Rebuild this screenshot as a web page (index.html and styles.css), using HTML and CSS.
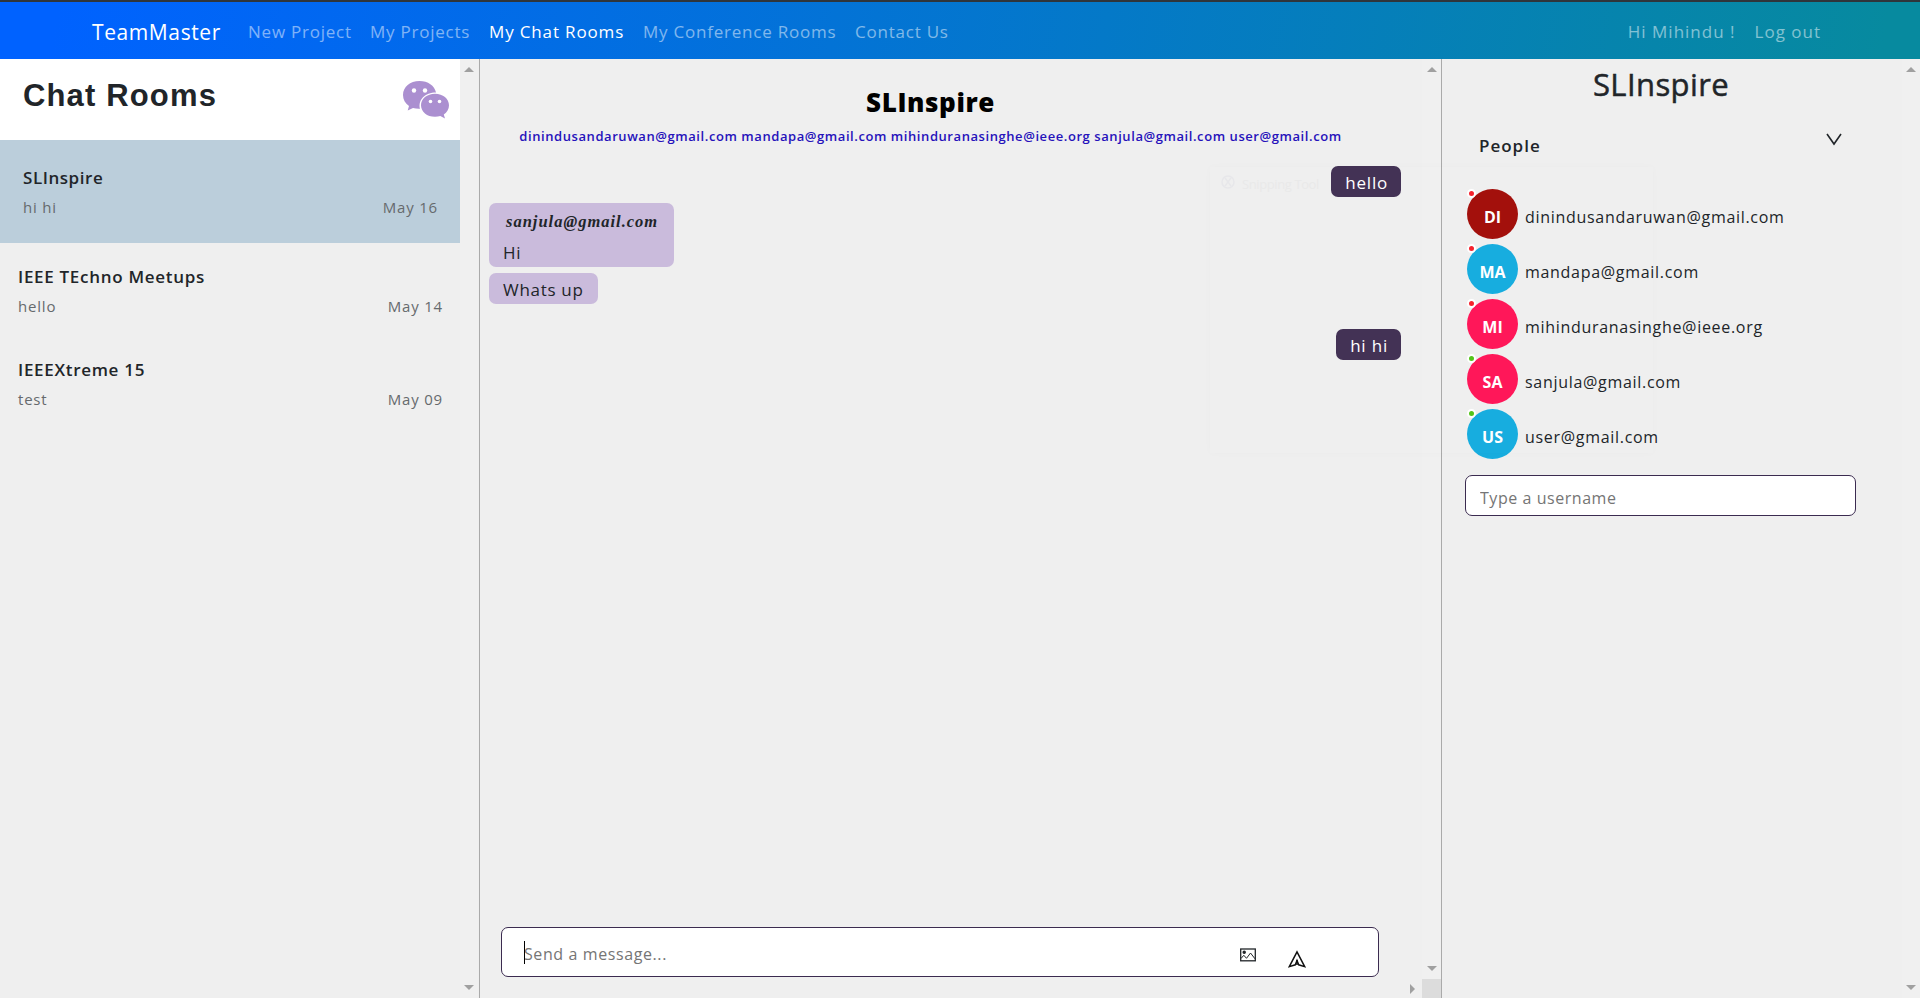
FILE: index.html
```
<!DOCTYPE html>
<html lang="en">
<head>
<meta charset="utf-8">
<title>TeamMaster</title>
<link rel="stylesheet" href="styles.css">
</head>
<body>
<nav class="navbar">
  <a class="brand">TeamMaster</a>
  <a class="link w-np">New Project</a>
  <a class="link w-mp">My Projects</a>
  <a class="link active w-cr">My Chat Rooms</a>
  <a class="link w-cf">My Conference Rooms</a>
  <a class="link">Contact Us</a>
  <div class="account"><a class="link">Hi Mihindu !</a><a class="link">Log out</a></div>
</nav>
<main class="layout">
  <aside class="rooms">
    <div class="rooms-list">
      <header class="rooms-head">
        <h1>Chat Rooms</h1>
        <svg class="chat-icon" width="48" height="40" viewBox="0 0 48 40">
          <path fill="#ab8fd0" d="M17.500 1C8 1 1 7 1 15c0 4.500 2.200 8.300 6 11l-1.300 4.500L11 28c2 .6 4.300.9 7 .8-2.200-9 5-16.300 16-16.300C32.500 5.500 26 1 17.500 1z"/>
          <path fill="#ab8fd0" d="M33 13.700c-8 0-14 5-14 11.500s6 11.600 14 11.600c1.900 0 3.700-.2 5.300-.8l4.700 2.400-1.200-3.900c3.200-2.100 5.200-5.500 5.200-9.300 0-6.500-6-11.500-14-11.500z"/>
          <g fill="#fff"><circle cx="12" cy="10.500" r="2.200"/><circle cx="23" cy="10.500" r="2.200"/><circle cx="28.500" cy="21.500" r="1.800"/><circle cx="37.500" cy="21.500" r="1.800"/></g>
        </svg>
      </header>
      <section class="room selected"><h2>SLInspire</h2><p><span>hi hi</span><span>May 16</span></p></section>
      <section class="room"><h2>IEEE TEchno Meetups</h2><p><span>hello</span><span>May 14</span></p></section>
      <section class="room"><h2>IEEEXtreme 15</h2><p><span>test</span><span>May 09</span></p></section>
    </div>
    <div class="scrollbar"><i class="up"></i><i class="down"></i></div>
  </aside>

  <section class="chat">
    <div class="chat-row">
      <div class="chat-body">
        <header class="chat-head">
          <h2>SLInspire</h2>
          <p>dinindusandaruwan@gmail.com mandapa@gmail.com mihinduranasinghe@ieee.org sanjula@gmail.com user@gmail.com</p>
        </header>
        <div class="messages">
          <div class="msg mine">hello</div>
          <div class="msg"><div class="sender">sanjula@gmail.com</div>Hi</div>
          <div class="msg">Whats up</div>
          <div class="msg mine spaced">hi hi</div>
        </div>
        <form class="composer">
          <span class="caret"></span>
          <input type="text" placeholder="Send a message...">
          <svg class="picture" width="16" height="14" viewBox="0 0 16 14" fill="none" stroke="#212529" stroke-width="1.300"><rect x=".7" y="1" width="14.600" height="11.800"/><path d="M1 10.500l2.800-3.200 2.700 3 4-5.300 4.500 5.800" stroke-width="1"/><circle cx="4.200" cy="4.300" r="1.100" fill="#212529"/></svg>
          <svg class="send" width="18" height="18" viewBox="0 0 18 18" fill="none" stroke="#111" stroke-width="1.500"><path d="M9 1.800L1.300 16.600l6-1.800L9 10.500l1.700 4.300 6 1.800z"/><path d="M9 10v5"/></svg>
        </form>
      </div>
      <div class="scrollbar"><i class="up"></i><i class="down"></i></div>
    </div>
    <div class="hscroll"><i class="right"></i><b></b></div>
  </section>

  <aside class="people">
    <div class="people-body">
      <h2 class="people-title">SLInspire</h2>
      <div class="people-head"><h3>People</h3>
        <svg width="16" height="13" viewBox="0 0 16 13" fill="none" stroke="#212529" stroke-width="1.600"><path d="M1 1l7 10 7-10"/></svg>
      </div>
      <ul>
        <li><span class="avatar red">DI<i></i></span><span class="email">dinindusandaruwan@gmail.com</span></li>
        <li><span class="avatar blue">MA<i></i></span><span class="email">mandapa@gmail.com</span></li>
        <li><span class="avatar pink">MI<i></i></span><span class="email">mihinduranasinghe@ieee.org</span></li>
        <li><span class="avatar pink">SA<i class="online"></i></span><span class="email">sanjula@gmail.com</span></li>
        <li><span class="avatar blue">US<i class="online"></i></span><span class="email">user@gmail.com</span></li>
      </ul>
      <input class="username" type="text" placeholder="Type a username">
    </div>
    <div class="scrollbar"><i class="up"></i><i class="down"></i></div>
  </aside>
</main>
<div class="ghost"><svg width="16" height="16" viewBox="0 0 16 16" fill="none" stroke="#e7e7ea" stroke-width="1.500"><circle cx="8" cy="8" r="6"/><path d="M5 4l6 8M11 4l-6 8"/></svg>Snipping Tool</div>
</body>
</html>
```
FILE: styles.css
```
* { box-sizing: border-box; margin: 0; padding: 0; }
body { width: 1920px; height: 1000px; overflow: hidden; background: #fff; color: #212529; font: 17px/24px "Open Sans", "Noto Sans", sans-serif; letter-spacing: .7px; white-space: nowrap; position: relative; }

.navbar { display: flex; align-items: center; height: 59px; border-top: 2px solid #2f353b; padding: 2px 99px 0 92px; background: linear-gradient(100deg, #0062ff 3%, #078a9f 98%); }
.brand { width: 156px; font-size: 21px; letter-spacing: .6px; color: #fff; }
.link { color: rgba(255,255,255,.5); letter-spacing: .77px; }
.active { color: #fff; letter-spacing: .85px; }
.w-np { width: 122px; }
.w-mp { width: 119px; }
.w-cr { width: 154px; }
.w-cf { width: 212px; }
.account { margin-left: auto; display: flex; gap: 19px; }
.account .link { letter-spacing: 1px; }

.layout { display: grid; grid-template-columns: 480px 962px 478px; height: 939px; background: #efefef; }
.layout > * { min-width: 0; }

.scrollbar { width: 18px; background: #f0f0f0; display: flex; flex-direction: column; justify-content: space-between; align-items: center; padding: 8px 0; }
.scrollbar i, .hscroll i { display: block; border: 5px solid transparent; width: 0; height: 0; }
.scrollbar .up { border-top: 0; border-bottom-color: #a0a0a0; }
.scrollbar .down { border-bottom: 0; border-top-color: #a0a0a0; }

.rooms { display: flex; border-right: 1px solid #aaa; }
.rooms-list { flex: none; width: 460px; }
.rooms-head { height: 81px; background: #fff; display: flex; justify-content: space-between; padding: 19px 10px 0 23px; }
.rooms-head h1 { font: bold 31px/36px "Liberation Sans", Arial, sans-serif; letter-spacing: 1.15px; }
.chat-icon { margin-top: 2px; }
.room { padding: 22px 17px 0 18px; height: 93px; }
.room h2 { font-size: 17px; line-height: 24px; font-weight: 600; letter-spacing: .7px; }
.room p { display: flex; justify-content: space-between; margin-top: 6px; font-size: 15px; line-height: 22px; color: #666a6d; letter-spacing: .8px; }
.room.selected { height: 103px; padding: 26px 22px 0 23px; background: #bbcedb; }
.room.selected h2 { letter-spacing: .55px; }

.chat { display: flex; flex-direction: column; border-right: 1px solid #aaa; }
.chat-row { display: flex; flex: 1; }
.chat-row .scrollbar { width: 19px; }
.chat-body { width: 942px; display: flex; flex-direction: column; }
.chat-head { width: 901px; text-align: center; padding-top: 25px; }
.chat-head h2 { font-size: 26px; line-height: 36px; font-weight: 800; letter-spacing: .6px; color: #000; }
.chat-head p { margin-top: 6px; font-size: 13px; line-height: 20px; font-weight: 600; letter-spacing: .57px; color: #2612bb; }
.messages { display: flex; flex-direction: column; align-items: flex-start; gap: 6px; margin: 20px 21px 0 9px; }
.msg { background: #cabbdc; border-radius: 7px; padding: 5px 14px 2px; }
.mine { align-self: flex-end; background: #433255; color: #fff; padding-right: 13px; letter-spacing: .8px; }
.spaced { margin-top: 19px; }
.sender { font: italic bold 16.500px/20px "Liberation Serif", "Times New Roman", serif; letter-spacing: 1px; padding: 0 2px 0 3px; margin: 4px 0 9px; }
.composer { position: relative; display: flex; align-items: flex-start; width: 878px; height: 50px; margin: auto 0 2px 21px; border: 1px solid #3b2b50; border-radius: 7px; background: #fff; padding-left: 22px; }
.composer input { border: 0; outline: 0; height: 48px; width: 716px; padding-top: 4px; background: none; font: 16px "Open Sans", "Noto Sans", sans-serif; letter-spacing: .6px; }
.caret { position: absolute; left: 22px; top: 13px; width: 1px; height: 23px; background: #000; }
.picture { margin-top: 20px; }
.send { margin: 22px 0 0 32px; }
input::placeholder { color: #757575; opacity: 1; }
.hscroll { height: 19px; display: flex; justify-content: flex-end; align-items: center; gap: 7px; }
.hscroll .right { border-right: 0; border-left-color: #a0a0a0; }
.hscroll b { width: 19px; height: 19px; background: #dcdcdc; }

.people { display: flex; }
.people-body { width: 460px; padding-right: 22px; }
.people-title { font-size: 31px; line-height: 40px; font-weight: 500; letter-spacing: .4px; text-align: center; padding-top: 5px; -webkit-text-stroke: .5px #212529; }
.people-head { display: flex; justify-content: space-between; padding: 30px 38px 0 37px; }
.people-head h3 { font-size: 17px; line-height: 24px; font-weight: 600; letter-spacing: 1px; }
.people-head svg { margin-top: -1px; }
.people ul { list-style: none; padding: 31px 0 0 25px; display: grid; gap: 5px; }
.people li { display: flex; align-items: center; height: 50px; font-size: 16px; letter-spacing: .7px; gap: 7px; }
.email { padding-top: 5px; }
.avatar { position: relative; width: 51px; height: 50px; border-radius: 50%; color: #fff; text-align: center; font-weight: 700; line-height: 56px; letter-spacing: 0; }
.avatar i { position: absolute; left: 0; top: 0; width: 9px; height: 9px; border: 2px solid #fff; border-radius: 50%; background: #f5222d; }
.avatar i.online { background: #52c41a; }
.red { background: #a3100c; }
.blue { background: #17addf; }
.pink { background: #ff1759; }
.username { display: block; width: 391px; height: 41px; margin: 16px 0 0 23px; border: 1px solid #3b2b50; border-radius: 7px; padding: 4px 14px 0; font: 16px "Open Sans", "Noto Sans", sans-serif; letter-spacing: .55px; }

/* fading translucent panel floating above the page */
.ghost { position: absolute; left: 1210px; top: 167px; width: 443px; height: 286px; padding: 7px 10px; display: flex; gap: 6px; align-items: flex-start; font-size: 13px; line-height: 20px; letter-spacing: -.4px; color: #e9e9e9; box-shadow: 0 0 8px rgba(0,0,0,.018); pointer-events: none; }
```
